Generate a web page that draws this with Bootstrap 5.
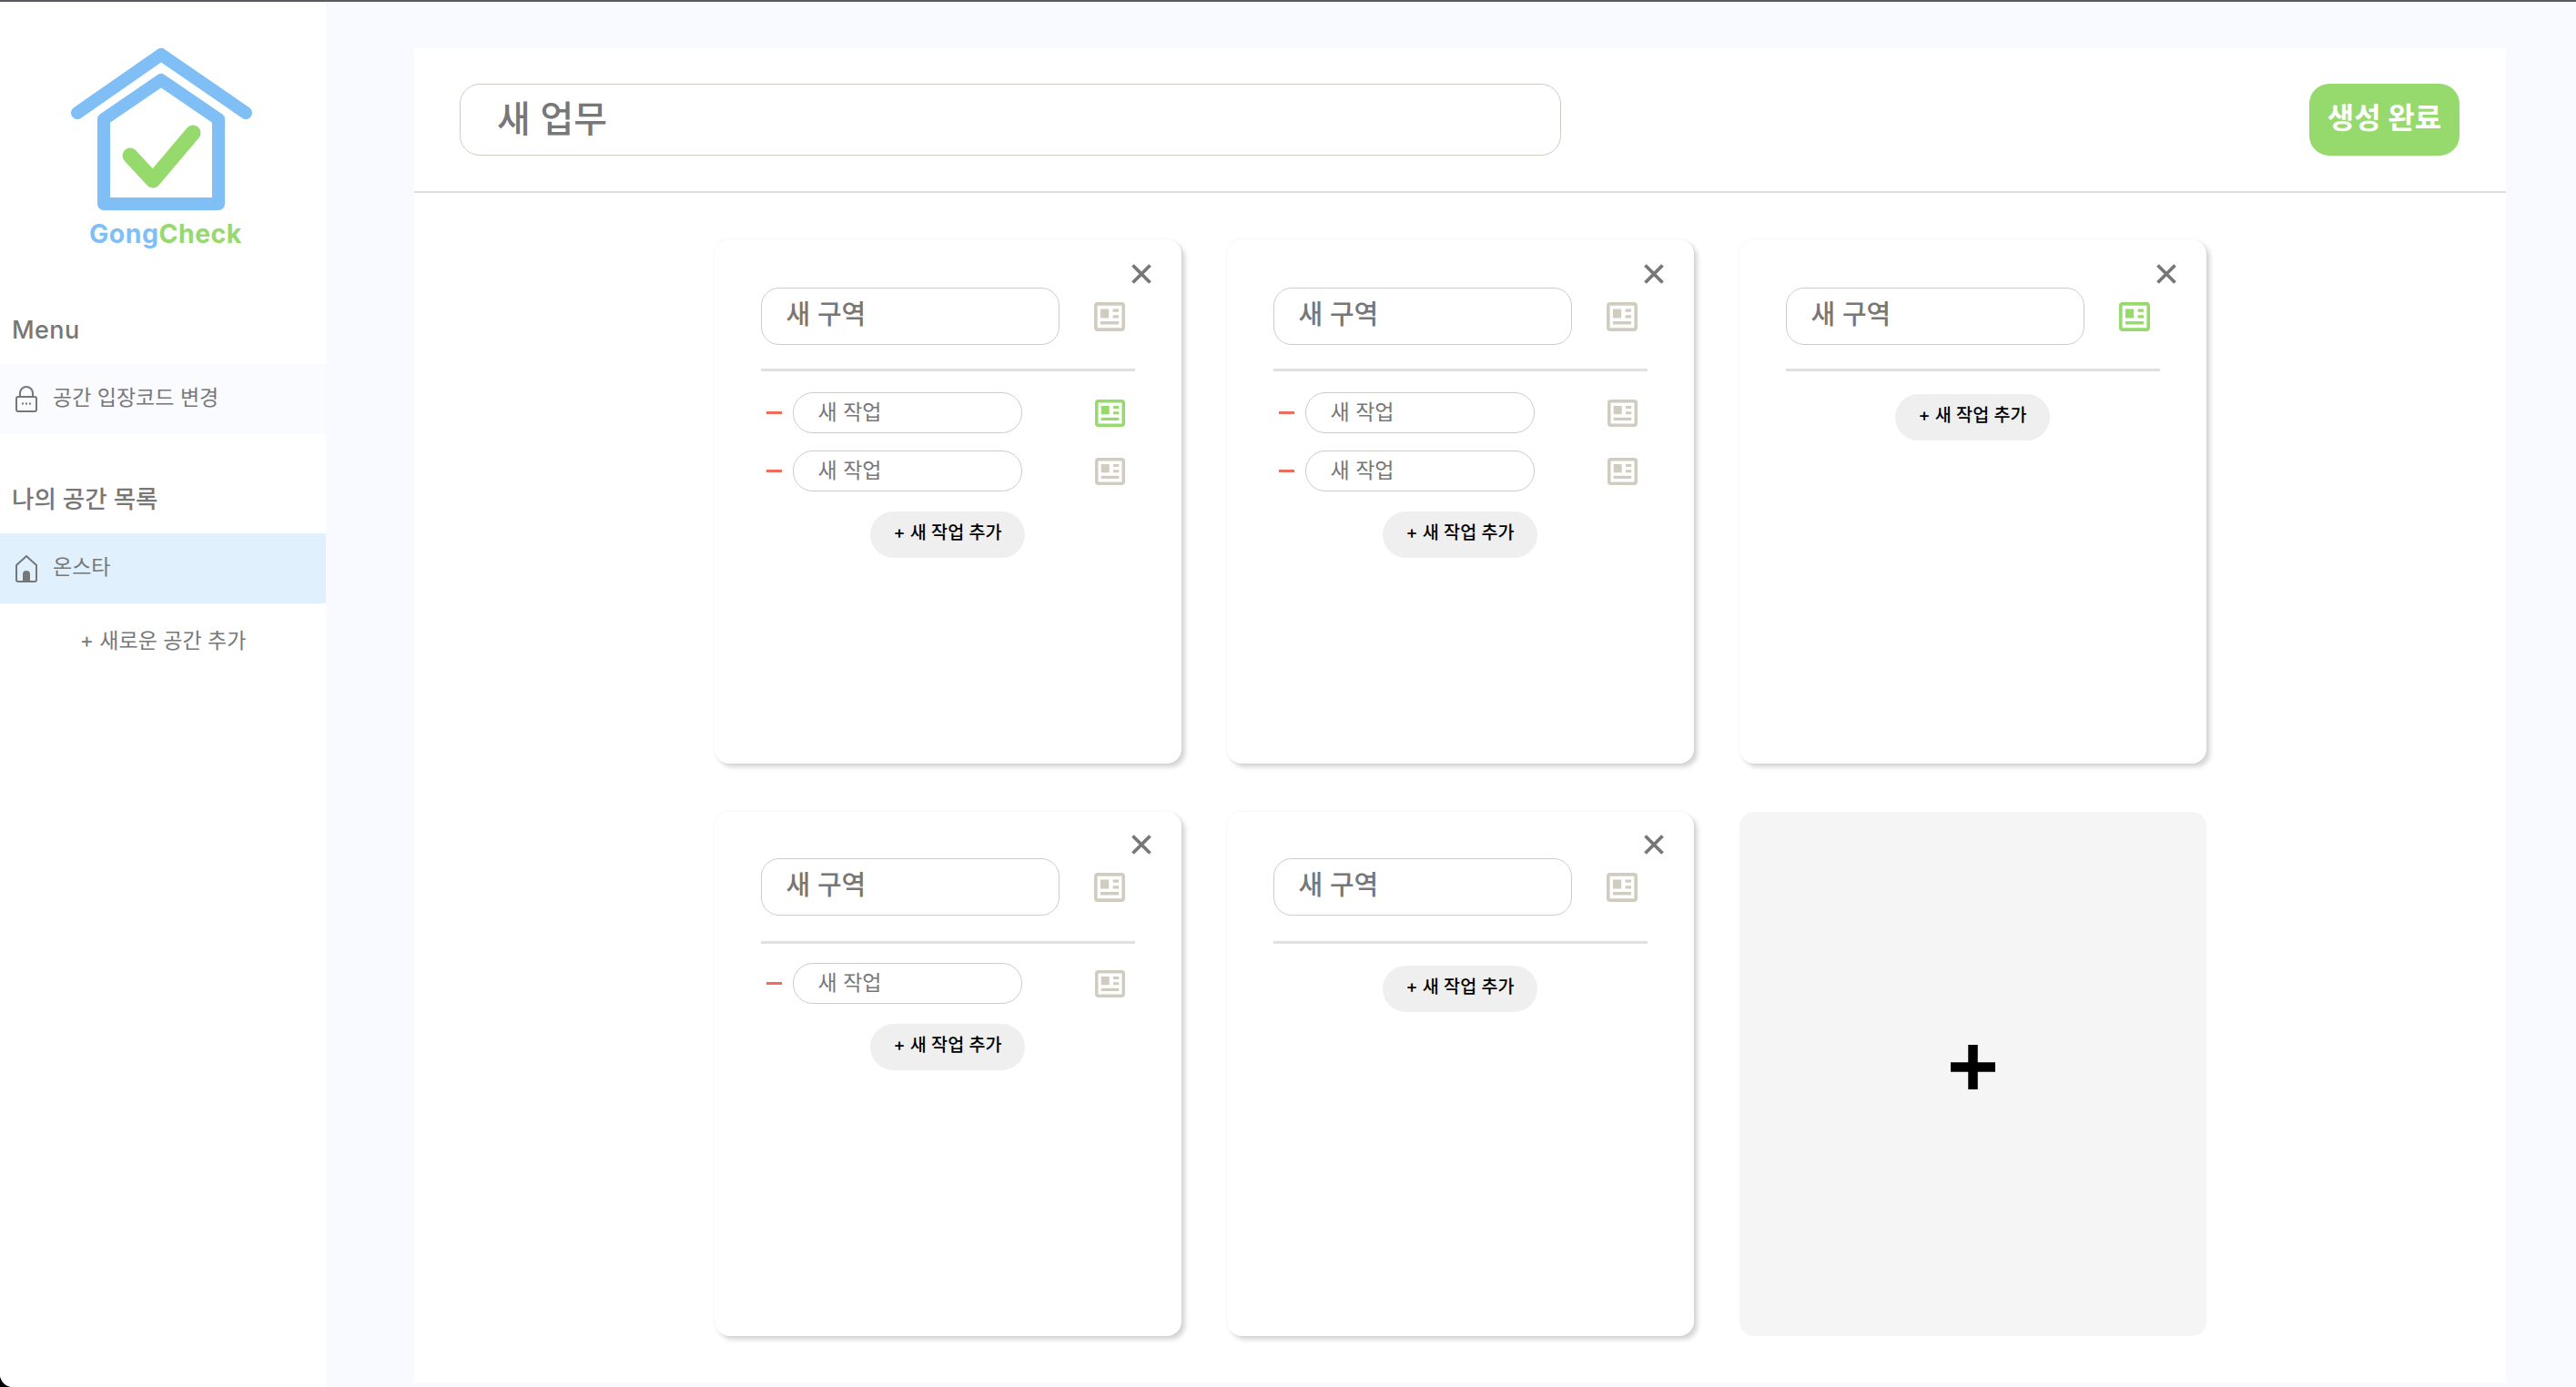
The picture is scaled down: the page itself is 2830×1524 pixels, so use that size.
<!DOCTYPE html>
<html lang="ko">
<head>
  <meta charset="UTF-8" />
  <title>GongCheck</title>
  <link href="https://cdn.jsdelivr.net/npm/bootstrap@5.3.0/dist/css/bootstrap.min.css" rel="stylesheet">
  <style>
    html { background: #000; height: 1524px; overflow: hidden; }
    body {
      font-family: Inter, "Noto Sans CJK KR", sans-serif;
      color: #777;
      height: 1524px;
      overflow: hidden;
      background: #f9faff;
      border-top: 2px solid #5a5a60;
      border-bottom-left-radius: 14px;
    }
    .side-bar { width: 358px; background: #fff; border-bottom-left-radius: 14px; }
    .side-logo { height: 348px; padding: 48px 0 0 78px; }
    .logo-name { font-size: 28.5px; font-weight: 700; letter-spacing: .45px; line-height: 34px; margin: 0 0 0 20px; }
    .logo-blue { color: #7fbff5; }
    .logo-green { color: #96d96c; }
    .side-head { font-size: 26.5px; font-weight: 500; line-height: 36px; padding-left: 13px; }
    .side-head-en { font-size: 27px; letter-spacing: .4px; margin-top: -5px; }
    .side-head-ko { margin-top: 53px; }
    .side-row { height: 77px; gap: 17px; padding-left: 17px; font-size: 23px; }
    .side-row span { margin-bottom: 2px; }
    .side-row-code { background: #fafbfe; margin-top: 19px; }
    .side-row-active { background: #e1f0fd; margin-top: 20px; }
    .side-add { font-size: 23px; text-align: center; margin-top: 23px; line-height: 36px; }
    .main-area { padding: 51px 77px 5px 97px; }
    .work-panel { background: #fff; height: 1466px; }
    .work-head { height: 159px; padding: 0 51px 0 50px; border-bottom: 2px solid #ddd; }
    .work-title.form-control {
      width: 1210px; height: 79px; padding: 0 40px 7px;
      border: 1.5px solid #d1ccc0; border-radius: 22px;
      font-size: 40px; font-weight: 500; color: #777;
    }
    .btn-finish.btn {
      width: 165px; height: 79px; padding: 0 0 4px;
      background: #96d96c; border: 0; border-radius: 22px;
      color: #fff; font-size: 32px; font-weight: 700;
    }
    .zone-grid {
      display: grid;
      grid-template-columns: repeat(3, 513px);
      grid-auto-rows: 576px;
      gap: 53px 50px;
      width: 1639px;
      margin: 51px auto 0;
    }
    .zone-card {
      position: relative;
      padding: 53px 51px 0;
      border: 0;
      border-radius: 16px;
      box-shadow: 4px 4px 5px rgba(0, 0, 0, .16), 0 0 3px rgba(0, 0, 0, .07);
    }
    .zone-close {
      position: absolute; top: 27px; right: 33px;
      width: 22px; height: 22px; display: block;
    }
    .zone-name.form-control {
      width: 328px; height: 63px; padding: 0 27px 9px;
      border: 1.5px solid #ccc; border-radius: 20px;
      font-size: 29px; font-weight: 500; color: #777;
    }
    .zone-rule { height: 3px; background: #e0e0e0; margin: 26px 0 23px; }
    .task-list { gap: 19px; margin-bottom: 22px; }
    .task-minus { width: 17px; height: 3px; background: #ee6c5a; margin: 0 12px 0 6px; }
    .task-name.form-control {
      width: 252px; height: 45px; padding: 0 27px 6px;
      border: 1.5px solid #ccc; border-radius: 22px;
      font-size: 23px; color: #777;
    }
    .sheet-icon { width: 33px; height: 30px; color: #d1ccc0; }
    .zone-icon { width: 34px; height: 32px; margin-left: 38px; }
    .task-icon { margin-left: 80px; }
    .sheet-on { color: #96d96c; }
    .btn-task.btn {
      display: block; width: 170px; height: 51px; margin: 0 auto; padding: 0 0 3px;
      background: #efefef; border: 0; border-radius: 26px;
      color: #000; font-size: 19.6px; font-weight: 500;
    }
    .zone-rule + .btn-task.btn { margin-top: 2px; }
    /* second row sits a touch tighter in the card */
    .zone-lower { padding-top: 51px; }
    .zone-lower .zone-close { top: 25px; }
    .zone-lower .zone-rule { margin: 28px 0 21px; }
    .zone-lower .zone-rule + .btn-task.btn { margin-top: 3px; }
    .zone-new { background: #f5f5f5; border-radius: 16px; padding-bottom: 16px; }
  </style>
</head>
<body class="d-flex">
  <svg width="0" height="0" class="position-absolute">
    <symbol id="sheet" viewBox="0 0 33 30" preserveAspectRatio="none">
      <rect x="1.75" y="1.75" width="29.5" height="26.5" rx="2" fill="none" stroke="currentColor" stroke-width="3.5"/>
      <path fill="currentColor" d="M6.7 7h9v9.3h-9zM20 7h6.3v3H20zM20 13.3h6.3v3H20zM6.7 19.7h19.6V23H6.7z"/>
    </symbol>
    <symbol id="cross" viewBox="0 0 22 22">
      <path d="M1.5 1.5l19 19M20.5 1.5l-19 19" fill="none" stroke="#777" stroke-width="3.8"/>
    </symbol>
  </svg>

  <aside class="side-bar flex-shrink-0">
    <div class="side-logo">
      <svg width="200" height="190" viewBox="78 50 200 190" class="d-block">
        <path d="M85 124L177 60l93 64" fill="none" stroke="#7fbff5" stroke-width="14" stroke-linecap="round" stroke-linejoin="round"/>
        <path d="M114 131l63-43 63 43v93H114z" fill="none" stroke="#7fbff5" stroke-width="14" stroke-linejoin="round"/>
        <path d="M143 171l25 27 44-52" fill="none" stroke="#96d96c" stroke-width="17" stroke-linecap="round" stroke-linejoin="round"/>
      </svg>
      <div class="logo-name"><span class="logo-blue">Gong</span><span class="logo-green">Check</span></div>
    </div>
    <div class="side-head side-head-en">Menu</div>
    <div class="side-row side-row-code d-flex align-items-center">
      <svg width="24" height="29" viewBox="0 0 24 29">
        <rect x="1" y="12" width="22" height="16" rx="2" fill="none" stroke="#777" stroke-width="2"/>
        <path d="M5 12V8a7 7 0 0 1 14 0v4" fill="none" stroke="#777" stroke-width="2"/>
        <path d="M7 19.5h2M11 19.5h2M15 19.5h2" stroke="#777" stroke-width="2"/>
      </svg>
      <span>공간 입장코드 변경</span>
    </div>
    <div class="side-head side-head-ko">나의 공간 목록</div>
    <div class="side-row side-row-active d-flex align-items-center">
      <svg width="24" height="30" viewBox="0 0 24 30">
        <path d="M1 11L12 1l11 10v16a2 2 0 0 1-2 2H3a2 2 0 0 1-2-2z" fill="none" stroke="#777" stroke-width="2" stroke-linejoin="round"/>
        <path d="M8 28v-7a4 4 0 0 1 8 0v7z" fill="#777"/>
      </svg>
      <span>온스타</span>
    </div>
    <div class="side-add">+ 새로운 공간 추가</div>
  </aside>

  <main class="main-area flex-grow-1">
    <div class="work-panel">
      <div class="work-head d-flex align-items-center justify-content-between">
        <input type="text" class="form-control work-title" value="새 업무">
        <button type="button" class="btn btn-finish">생성 완료</button>
      </div>

      <div class="zone-grid">
        <div class="card zone-card">
          <svg class="zone-close"><use href="#cross"/></svg>
          <div class="d-flex align-items-center">
            <input type="text" class="form-control zone-name" value="새 구역">
            <svg class="sheet-icon zone-icon"><use href="#sheet"/></svg>
          </div>
          <div class="zone-rule"></div>
          <div class="task-list d-flex flex-column">
            <div class="d-flex align-items-center">
              <span class="task-minus"></span>
              <input type="text" class="form-control task-name" value="새 작업">
              <svg class="sheet-icon task-icon sheet-on"><use href="#sheet"/></svg>
            </div>
            <div class="d-flex align-items-center">
              <span class="task-minus"></span>
              <input type="text" class="form-control task-name" value="새 작업">
              <svg class="sheet-icon task-icon"><use href="#sheet"/></svg>
            </div>
          </div>
          <button type="button" class="btn btn-task">+ 새 작업 추가</button>
        </div>

        <div class="card zone-card">
          <svg class="zone-close"><use href="#cross"/></svg>
          <div class="d-flex align-items-center">
            <input type="text" class="form-control zone-name" value="새 구역">
            <svg class="sheet-icon zone-icon"><use href="#sheet"/></svg>
          </div>
          <div class="zone-rule"></div>
          <div class="task-list d-flex flex-column">
            <div class="d-flex align-items-center">
              <span class="task-minus"></span>
              <input type="text" class="form-control task-name" value="새 작업">
              <svg class="sheet-icon task-icon"><use href="#sheet"/></svg>
            </div>
            <div class="d-flex align-items-center">
              <span class="task-minus"></span>
              <input type="text" class="form-control task-name" value="새 작업">
              <svg class="sheet-icon task-icon"><use href="#sheet"/></svg>
            </div>
          </div>
          <button type="button" class="btn btn-task">+ 새 작업 추가</button>
        </div>

        <div class="card zone-card">
          <svg class="zone-close"><use href="#cross"/></svg>
          <div class="d-flex align-items-center">
            <input type="text" class="form-control zone-name" value="새 구역">
            <svg class="sheet-icon zone-icon sheet-on"><use href="#sheet"/></svg>
          </div>
          <div class="zone-rule"></div>
          <button type="button" class="btn btn-task">+ 새 작업 추가</button>
        </div>

        <div class="card zone-card zone-lower">
          <svg class="zone-close"><use href="#cross"/></svg>
          <div class="d-flex align-items-center">
            <input type="text" class="form-control zone-name" value="새 구역">
            <svg class="sheet-icon zone-icon"><use href="#sheet"/></svg>
          </div>
          <div class="zone-rule"></div>
          <div class="task-list d-flex flex-column">
            <div class="d-flex align-items-center">
              <span class="task-minus"></span>
              <input type="text" class="form-control task-name" value="새 작업">
              <svg class="sheet-icon task-icon"><use href="#sheet"/></svg>
            </div>
          </div>
          <button type="button" class="btn btn-task">+ 새 작업 추가</button>
        </div>

        <div class="card zone-card zone-lower">
          <svg class="zone-close"><use href="#cross"/></svg>
          <div class="d-flex align-items-center">
            <input type="text" class="form-control zone-name" value="새 구역">
            <svg class="sheet-icon zone-icon"><use href="#sheet"/></svg>
          </div>
          <div class="zone-rule"></div>
          <button type="button" class="btn btn-task">+ 새 작업 추가</button>
        </div>

        <div class="zone-new d-flex align-items-center justify-content-center">
          <svg width="49" height="49" viewBox="0 0 49 49">
            <path d="M24.5 0v49M0 24.5h49" stroke="#000" stroke-width="10.5"/>
          </svg>
        </div>
      </div>
    </div>
  </main>

  <script src="https://cdn.jsdelivr.net/npm/bootstrap@5.3.0/dist/js/bootstrap.bundle.min.js"></script>
</body>
</html>
